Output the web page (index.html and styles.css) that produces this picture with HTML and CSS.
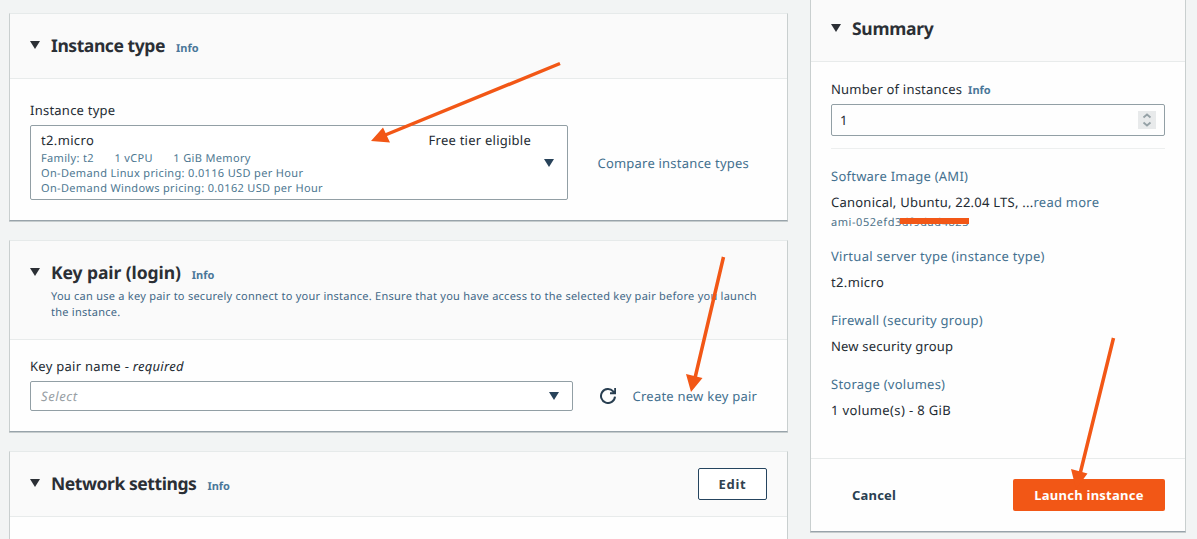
FILE: index.html
```
<!DOCTYPE html>
<html lang="en">
<head>
<meta charset="utf-8">
<title>Launch an instance</title>
<link rel="stylesheet" href="styles.css">
</head>
<body>
<div class="page">
  <main class="main">
    <section class="card card-type">
      <header class="card-head">
        <svg class="caret" viewBox="0 0 10 8"><path d="M0 0h10L5 8z"/></svg>
        <h2><span class="t-type">Instance type</span></h2><a class="info">Info</a>
      </header>
      <div class="card-body">
        <div class="field">
          <label class="label"><span class="t-label">Instance type</span></label>
          <div class="select select-tall">
            <div class="option">
              <div class="option-top"><span class="t-micro">t2.micro</span><span class="t-free">Free tier eligible</span></div>
              <div class="tags"><span>Family: t2</span><span>1 vCPU</span><span>1 GiB Memory</span></div>
              <div class="price">On-Demand Linux pricing: 0.0116 USD per Hour</div>
              <div class="price">On-Demand Windows pricing: 0.0162 USD per Hour</div>
            </div>
            <svg class="caret caret-blue" viewBox="0 0 10 8"><path d="M0 0h10L5 8z"/></svg>
          </div>
        </div>
        <a class="link compare">Compare instance types</a>
      </div>
    </section>

    <section class="card card-key">
      <header class="card-head">
        <svg class="caret" viewBox="0 0 10 8"><path d="M0 0h10L5 8z"/></svg>
        <div>
          <div class="head-row"><h2><span class="t-key">Key pair (login)</span></h2><a class="info">Info</a></div>
          <p class="desc">You can use a key pair to securely connect to your instance. Ensure that you have access to the selected key pair before you launch<br>the instance.</p>
        </div>
      </header>
      <div class="card-body">
        <div class="field">
          <label class="label"><span class="t-name">Key pair name - <i>required</i></span></label>
          <div class="key-row">
            <div class="select select-short"><i class="placeholder">Select</i>
              <svg class="caret caret-blue" viewBox="0 0 10 8"><path d="M0 0h10L5 8z"/></svg>
            </div>
            <svg class="refresh" viewBox="0 0 16 16"><path d="M15 8.6A7 7 0 1 1 13.2 3.3L14.8 5M15.200 0v5.200H10"/></svg>
            <a class="link create">Create new key pair</a>
          </div>
        </div>
      </div>
    </section>

    <section class="card card-network">
      <header class="card-head">
        <svg class="caret" viewBox="0 0 10 8"><path d="M0 0h10L5 8z"/></svg>
        <h2><span class="t-network">Network settings</span></h2><a class="info">Info</a>
        <button class="edit">Edit</button>
      </header>
      <div class="card-body"></div>
    </section>
  </main>

  <aside class="card summary">
    <header class="card-head">
      <svg class="caret" viewBox="0 0 10 8"><path d="M0 0h10L5 8z"/></svg>
      <h2><span class="t-summary">Summary</span></h2>
    </header>
    <div class="summary-body">
      <label class="label"><span class="t-number">Number of instances</span><a class="info">Info</a></label>
      <div class="number"><span>1</span>
        <svg class="stepper" viewBox="0 0 18 18"><path d="M5.500 6.500L9 3.500l3.500 3M5.500 11.500L9 14.500l3.500-3"/></svg>
      </div>
      <dl>
        <dt>Software Image (AMI)</dt>
        <dd><span>Canonical, Ubuntu, 22.04 LTS, ...<a class="link">read more</a></span><div class="ami">ami-052efd3df9dad4825</div></dd>
        <dt class="t-virtual">Virtual server type (instance type)</dt>
        <dd><span class="t-micro">t2.micro</span></dd>
        <dt>Firewall (security group)</dt>
        <dd><span class="t-group">New security group</span></dd>
        <dt>Storage (volumes)</dt>
        <dd><span class="t-volume">1 volume(s) - 8 GiB</span></dd>
      </dl>
    </div>
    <footer class="actions">
      <button class="cancel">Cancel</button>
      <button class="launch">Launch instance</button>
    </footer>
  </aside>
</div>
<svg class="arrows" viewBox="0 0 1197 539">
  <path class="shaft" d="M560 63.5L384 135.500M723.500 257L695 378M1113.500 338L1080 474"/>
  <path d="M371 141L383 127.500L390 142.500zM691 392L686 374L702.500 378zM1076 489L1071 469L1087.500 473.500z"/>
</svg>
</body>
</html>
```
FILE: styles.css
```
* { box-sizing: border-box; }
body {
  margin: 0; width: 1197px; height: 539px; overflow: hidden;
  background: #f2f4f4; color: #232b33;
  font: 13px/20px "Noto Sans", "Open Sans", sans-serif;
  letter-spacing: 0.24px;
  text-rendering: geometricPrecision;
}
h2, p, dl, dd { margin: 0; }
h2 { font-size: 17.5px; line-height: 24px; font-weight: 700; color: #2b2f35; white-space: nowrap; }
button { font: 700 13px/20px "Noto Sans", "Open Sans", sans-serif; padding: 0; border: 0; background: none; }
.page { display: flex; gap: 22px; padding-left: 9px; height: 539px; overflow: hidden; }
.main { width: 779px; padding-top: 13px; display: flex; flex-direction: column; gap: 19px; }
.card {
  flex: none; background: #fefefe;
  border: 1px solid #c9cfcf; border-top-color: #e6eaea; border-bottom-color: #98a3aa;
  box-shadow: 0 1px 0 #c6cccd;
}
.card-type { height: 208px; }
.card-key { height: 192px; }
.card-network { height: 110px; }
.card-head { display: flex; border-bottom: 1px solid #e8ebeb; background: #fafafa; padding: 20px 20px 0; height: 65px; }
.card-key .card-head { height: 99px; }
.head-row { display: flex; }
.caret { width: 10px; height: 8px; flex: none; margin: 7px 11px 0 0; fill: #2b2f35; }
.t-type, .t-network { letter-spacing: -0.43px; }
.t-key { letter-spacing: -0.08px; }
.t-summary { letter-spacing: -0.28px; }
.info { color: #4a7799; font-size: 11px; line-height: 20px; font-weight: 700; letter-spacing: 0; margin: 5px 0 0 11px; }
.link, dt { color: #43708f; }
.label { display: flex; line-height: 20px; white-space: nowrap; }
.card-body { display: flex; padding: 21px 20px 0; }
.select { display: flex; border: 1px solid #929fa5; border-radius: 2px; background: #fff; }
.select-tall { width: 538px; height: 75px; margin-top: 5px; padding: 4px 13px 0 10px; justify-content: space-between; }
.option { width: 490px; color: #4d7791; white-space: nowrap; }
.option-top { display: flex; justify-content: space-between; font-size: 13px; line-height: 20px; color: #232b33; }
.t-micro { letter-spacing: 0.35px; }
.tags, .price { font-size: 11px; line-height: 15px; height: 15px; letter-spacing: 0.34px; }
.tags { display: flex; gap: 20.5px; margin-top: 1px; }
.caret-blue { fill: #28435a; margin: 0; }
.select-tall .caret { margin-top: 29px; }
.compare { margin: 53px 0 0 29.5px; letter-spacing: 0.21px; }
.desc { font-size: 11px; line-height: 16px; letter-spacing: 0.255px; color: #3f6786; white-space: nowrap; margin-top: 3px; }
.card-key .card-body { padding-top: 16px; }
.t-name { letter-spacing: 0.28px; }
.key-row { display: flex; align-items: center; margin-top: 5px; }
.select-short { width: 543px; height: 30px; align-items: center; justify-content: space-between; padding: 0 13px 0 10px; }
.placeholder { color: #98a0a5; letter-spacing: 0.6px; }
.refresh { width: 16px; height: 16px; margin: 0 17px 0 27px; fill: none; stroke: #293f51; stroke-width: 2; }
.create { margin-left: -0.5px; }
.edit { width: 69px; height: 32px; margin: -4px 0 0 auto; border: 1px solid #25445f; border-radius: 2px; color: #31424f; background: #fff; letter-spacing: 0.7px; }

.summary { width: 376px; height: 532px; border-top: 0; }
.summary .card-head { height: 62px; padding-top: 17px; }
.summary-body { height: 396px; padding: 17px 20px 0; }
.summary .label .info { margin: 2px 0 0 6px; }
.t-number { letter-spacing: 0.2px; }
.number { display: flex; justify-content: space-between; align-items: center; height: 32px; margin-top: 3px; padding: 0 8px 0 8px; border: 1px solid #929fa5; border-radius: 2px; }
.stepper { width: 18px; height: 18px; background: #e8eaeb; fill: none; stroke: #95a1a6; stroke-width: 1.8; }
dl { margin-top: 12px; padding-top: 17px; border-top: 1px solid #edefef; white-space: nowrap; }
dt { line-height: 20px; }
.t-virtual { letter-spacing: 0.28px; }
.t-volume { letter-spacing: 0.36px; }
.t-group { letter-spacing: 0.19px; }
dd { padding-top: 6px; margin-bottom: 18px; }
dd > span { display: block; height: 20px; }
.ami { position: relative; font-size: 11px; line-height: 21px; height: 16px; letter-spacing: 0.55px; color: #4d7188; }
.ami::after { content: ""; position: absolute; left: 69px; top: 6px; width: 69px; height: 6px; background: #f25716; }
.actions { display: flex; justify-content: space-between; align-items: center; height: 73px; padding: 0 20px 0 41px; border-top: 1px solid #e8ebeb; }
.cancel { color: #293f51; letter-spacing: 0.2px; }
.launch { width: 152px; height: 32px; border-radius: 2px; background: #f25716; color: #fff; letter-spacing: 0.25px; }
.arrows { position: absolute; left: 0; top: 0; width: 1197px; height: 539px; fill: #f25716; pointer-events: none; }
.shaft { stroke: #f25716; stroke-width: 3.5; fill: none; }
```
